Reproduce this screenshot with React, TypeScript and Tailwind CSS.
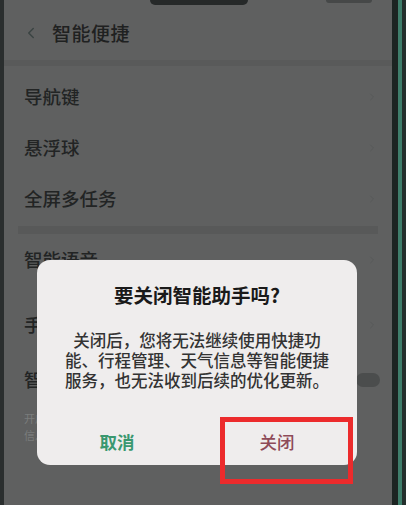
import { ChevronLeft, ChevronRight } from 'lucide-react';

const cjk = { fontFamily: '"Noto Sans CJK SC", "Noto Sans", sans-serif' };

function Row({ label }: { label: string }) {
  return (
    <div className="flex items-center justify-between h-[51px] pl-[20px] pr-[14px]">
      <span className="text-[18.5px] font-medium text-[#222424]">{label}</span>
      <ChevronRight className="w-[12px] h-[12px] text-[#575959]" strokeWidth={2} />
    </div>
  );
}

export default function App() {
  return (
    <div className="w-[406px] h-[505px] flex bg-[#1b1f1e] overflow-hidden" style={cjk}>
      {/* left bezel */}
      <div className="w-[4px] bg-[#2a2e2e]" />

      {/* screen */}
      <div className="relative w-[388px] bg-[#5f6060] flex flex-col">
        {/* status bar */}
        <div className="h-[6px] flex">
          <div className="ml-[146px] w-[98px] h-[5px] rounded-b-[6px] bg-[#262929]" />
          <div className="ml-auto mr-[20px] w-[46px] h-[3px] bg-[#464848] rounded-b" />
        </div>

        {/* header */}
        <div className="h-[54px] flex items-center pl-[18px] gap-[12px]">
          <ChevronLeft className="w-[18px] h-[18px] text-[#3b4443]" strokeWidth={2} />
          <span className="text-[19px] font-medium text-[#1f2121] tracking-[0.5px]">智能便捷</span>
        </div>

        <div className="h-[6px] bg-[#595a5a]" />

        <div className="pt-[5px] flex flex-col">
          <Row label="导航键" />
          <Row label="悬浮球" />
          <Row label="全屏多任务" />
        </div>

        <div className="mt-[2px] mx-[14px] h-[8px] bg-[#585959]" />

        <div className="flex flex-col">
          <Row label="智能语音" />
          <div className="h-[14px]" />
          <Row label="手势体感" />
          <div className="flex items-center justify-between h-[60px] pl-[20px] pr-[12px]">
            <span className="text-[18.5px] font-medium text-[#222424]">智能助手</span>
            <div className="w-[24px] h-[14px] rounded-full bg-[#4b4d4d]" />
          </div>
          <div className="pl-[20px] flex flex-col text-[11px] leading-[17px] text-[#7a7c7c]">
            <span>开启后可在负一屏查看</span>
            <span>信息</span>
          </div>
        </div>

        {/* dialog */}
        <div className="absolute left-[33px] top-[260px] w-[320px] h-[205px] rounded-[13px] bg-[#efeded] flex flex-col items-center pt-[22px]">
          <div className="h-[26px] leading-[26px] text-[19.5px] font-bold text-[#1a1a1a]">要关闭智能助手吗?</div>
          <div className="mt-[22px] text-center text-[16.5px] leading-[20px] font-medium text-[#333333]">
            关闭后，您将无法继续使用快捷功
            <br />
            能、行程管理、天气信息等智能便捷
            <br />
            服务，也无法收到后续的优化更新。
          </div>
          <div className="mt-auto w-full h-[46px] flex">
            <div className="flex-1 flex items-center justify-center text-[17.5px] text-[#3a9870] font-bold">取消</div>
            <div className="flex-1 flex items-center justify-center text-[17.5px] text-[#8e4a58] font-medium">关闭</div>
          </div>
        </div>

        {/* red highlight box */}
        <div className="absolute left-[216px] top-[417px] w-[133px] h-[67px] border-[5px] border-[#ec2b2c]" />
      </div>

      {/* right bezel */}
      <div className="flex-1 flex">
        <div className="w-[6px] bg-[#1c2422]" />
        <div className="w-[4px] bg-[#3f7e6b]" />
        <div className="flex-1 bg-[#24302d]" />
      </div>
    </div>
  );
}
